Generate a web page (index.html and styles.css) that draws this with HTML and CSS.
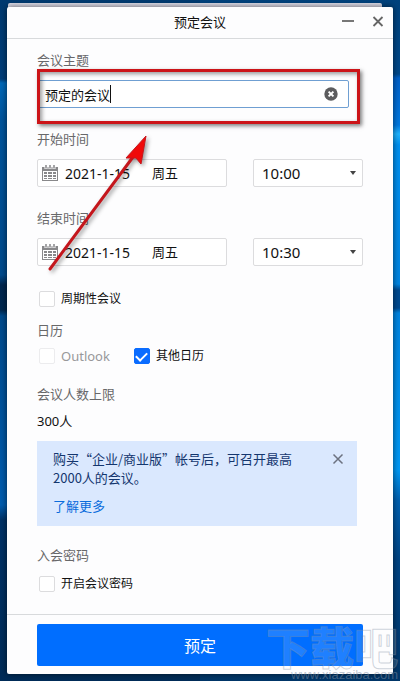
FILE: index.html
```html
<!DOCTYPE html>
<html lang="zh-CN">
<head>
    <meta charset="UTF-8">
    <meta name="viewport" content="width=device-width, initial-scale=1.0">
    <title>预定会议</title>
    <link rel="stylesheet" href="styles.css">
</head>
<body>
<div class="desktop">
    <div class="back-window"></div>
    <div class="window">
        <header class="title-bar">
            <h1>预定会议</h1>
            <div class="window-buttons">
                <button type="button" aria-label="最小化">
                    <svg width="12" height="12" viewBox="0 0 12 12"><path d="M0 5h12" stroke="#777" stroke-width="2"/></svg>
                </button>
                <button type="button" aria-label="关闭">
                    <svg width="12" height="12" viewBox="0 0 12 12"><path d="M1.5 1l9 9M10.5 1l-9 9" stroke="#666" stroke-width="1.8"/></svg>
                </button>
            </div>
        </header>
        <form class="meeting-form" id="meeting-form">
            <div class="group">
                <label class="caption" for="topic">会议主题</label>
                <div class="field topic">
                    <input type="text" id="topic" value="预定的会议">
                    <span class="caret"></span>
                    <button type="button" class="clear" aria-label="清空">
                        <svg width="14" height="14" viewBox="0 0 14 14"><circle cx="7" cy="7" r="6.7" fill="#5c5c5e"/><path d="M4.6 4.6l4.8 4.8M9.4 4.6l-4.8 4.8" stroke="#fff" stroke-width="2"/></svg>
                    </button>
                </div>
            </div>
            <div class="group">
                <label class="caption" for="start-date">开始时间</label>
                <div class="time-row">
                    <div class="field date">
                        <svg class="calendar" width="16" height="16" viewBox="0 0 16 16"><path d="M0 2h16v14H0z" fill="#88888a"/><path d="M1 6h14v9H1z" fill="#fff"/><path d="M4 0v4M8 0v4M12 0v4" stroke="#fff" stroke-width="3"/><path d="M4 0v3.5M8 0v3.5M12 0v3.5" stroke="#88888a" stroke-width="1.5"/><path d="M2 7h3v2H2zM6 7h4v2H6zM11 7h3v2h-3zM2 10h3v2H2zM6 10h4v2H6zM11 10h3v2h-3zM2 13h3v1H2zM6 13h4v1H6zM11 13h3v1h-3z" fill="#88888a"/></svg>
                        <input type="text" id="start-date" value="2021-1-15">
                        <span>周五</span>
                    </div>
                    <div class="field time">
                        <select aria-label="开始时刻"><option>10:00</option><option>10:30</option></select>
                    </div>
                </div>
            </div>
            <div class="group">
                <label class="caption" for="end-date">结束时间</label>
                <div class="time-row">
                    <div class="field date">
                        <svg class="calendar" width="16" height="16" viewBox="0 0 16 16"><path d="M0 2h16v14H0z" fill="#88888a"/><path d="M1 6h14v9H1z" fill="#fff"/><path d="M4 0v4M8 0v4M12 0v4" stroke="#fff" stroke-width="3"/><path d="M4 0v3.5M8 0v3.5M12 0v3.5" stroke="#88888a" stroke-width="1.5"/><path d="M2 7h3v2H2zM6 7h4v2H6zM11 7h3v2h-3zM2 10h3v2H2zM6 10h4v2H6zM11 10h3v2h-3zM2 13h3v1H2zM6 13h4v1H6zM11 13h3v1h-3z" fill="#88888a"/></svg>
                        <input type="text" id="end-date" value="2021-1-15">
                        <span>周五</span>
                    </div>
                    <div class="field time">
                        <select aria-label="结束时刻"><option>10:30</option><option>11:00</option></select>
                    </div>
                </div>
            </div>
            <label class="check"><input type="checkbox"> 周期性会议</label>
            <div class="calendars">
                <p class="caption">日历</p>
                <div class="check-row">
                    <label class="check disabled"><input type="checkbox" disabled> Outlook</label>
                    <label class="check"><input type="checkbox" checked> 其他日历</label>
                </div>
            </div>
            <div class="limit">
                <p class="caption">会议人数上限</p>
                <p class="limit-value">300人</p>
                <div class="notice">
                    <div>
                        <p>购买“企业/商业版”帐号后，可召开最高2000人的会议。</p>
                        <a href="#">了解更多</a>
                    </div>
                    <button type="button" aria-label="关闭提示">
                        <svg width="12" height="12" viewBox="0 0 12 12"><path d="M1.5 1.5l9 9M10.5 1.5l-9 9" stroke="#6c7280" stroke-width="1.5"/></svg>
                    </button>
                </div>
            </div>
            <div class="password">
                <p class="caption">入会密码</p>
                <label class="check"><input type="checkbox"> 开启会议密码</label>
            </div>
        </form>
        <footer class="actions">
            <button type="submit" form="meeting-form">预定</button>
        </footer>
        <!-- tutorial marks over the window -->
        <div class="highlight"></div>
        <svg class="arrow" width="110" height="145" viewBox="0 0 110 145">
            <path d="M7 138L90 26" stroke="#c4161c" stroke-width="3" stroke-linecap="round"/>
            <path d="M103 5L98 33L93 27L83 27Z" fill="#f00a0a" stroke="#c4161c"/>
        </svg>
    </div>
    <div class="watermark">
        <span class="watermark-name">下载吧</span>
        <span class="watermark-url">www.xiazaiba.com</span>
    </div>
</div>
</body>
</html>
```
FILE: styles.css
```css
* {
    box-sizing: border-box;
}
body {
    margin: 0;
    font-family: "Noto Sans", "Noto Sans CJK SC", sans-serif;
    font-size: 13px;
    line-height: 18px;
    color: #111;
}
h1, p {
    margin: 0;
}
button {
    padding: 0;
    border: none;
    background: none;
    cursor: pointer;
}
svg {
    display: block;
}
input, select {
    font-family: inherit;
    color: inherit;
}
.desktop {
    position: relative;
    display: flex;
    min-height: 100vh;
    padding: 7px;
    overflow: hidden;
    background:
        linear-gradient(#003a70 0, #003d78 79px, #0068b8 83px, #00549c 120px, #004a8c 275px, #00264e 285px, #00284f 310px, #004a8c 316px, #005cae 505px, #003266 520px, #002c58 100%) left / 50% 100% no-repeat,
        linear-gradient(#00427c 0, #00488a 74px, #0060c8 78px, #0078e0 125px, #20b4ff 134px, #0090f0 145px, #0084e0 284px, #004a90 290px, #004a90 308px, #0084e0 313px, #0098f4 470px, #0060b0 500px, #004484 560px, #003668 100%) right / 50% 100% no-repeat;
}
.back-window {
    position: absolute;
    top: 3px;
    left: 8px;
    right: 18px;
    height: 30px;
    background: #dcdbe8;
    border-radius: 2px;
}
.window {
    position: relative;
    display: flex;
    flex: 1;
    flex-direction: column;
    background: #fdfdfe;
    border-radius: 2px;
    box-shadow: 0 0 6px rgba(0, 0, 0, 0.6);
}
.title-bar {
    display: grid;
    grid-template-columns: 1fr auto 1fr;
    align-items: center;
    height: 32px;
    padding: 0 9px 2px;
    border-bottom: 1px solid #d8dadc;
}
.title-bar h1 {
    grid-column: 2;
    font-size: 13px;
    font-weight: normal;
}
.window-buttons {
    display: flex;
    justify-content: flex-end;
    gap: 18px;
}
.meeting-form {
    display: flex;
    flex: 1;
    flex-direction: column;
    align-items: stretch;
    padding: 12px 30px 21px;
}
.group {
    margin-bottom: 22px;
}
.caption {
    display: block;
    margin-bottom: 11px;
    color: #68686a;
}
.field {
    display: flex;
    align-items: center;
    height: 28px;
    border: 1px solid #dcdcde;
    border-radius: 2px;
    background: #fff;
}
.field input {
    min-width: 0;
    padding: 0;
    border: none;
    outline: none;
    background: none;
}
.topic {
    margin-right: 14px;
    padding: 0 10px 0 7px;
    border-color: #6f9fd2;
}
.topic input {
    width: 65px;
    font-size: 13px;
}
.caret {
    width: 1px;
    height: 18px;
    background: #111;
}
.clear {
    margin-left: auto;
}
.time-row {
    display: grid;
    grid-template-columns: 19fr 11fr;
    gap: 26px;
}
.date {
    padding-left: 4px;
}
.date input {
    width: 87px;
    margin-left: 7px;
    font-size: 14px;
}
.time {
    position: relative;
}
.time select {
    width: 100%;
    height: 100%;
    padding: 0 8px;
    border: none;
    background: none;
    appearance: none;
    font-size: 15px;
}
.time::after {
    content: "";
    position: absolute;
    top: 11px;
    right: 6px;
    border: 3px solid transparent;
    border-top: 4px solid #444;
    border-bottom: none;
    pointer-events: none;
}
.check {
    display: flex;
    align-items: center;
    gap: 6px;
    padding-left: 2px;
    font-size: 12px;
}
.check input {
    width: 16px;
    height: 16px;
    margin: 0;
    border: 1px solid #dcdcde;
    border-radius: 2px;
    background: #fff;
    appearance: none;
}
.check input:checked {
    border-color: #0a6cff;
    background: #0a6cff;
}
.check input:checked::after {
    content: "";
    display: block;
    width: 5px;
    height: 9px;
    margin: 1px auto 0;
    border: solid #fff;
    border-width: 0 2px 2px 0;
    transform: rotate(45deg);
}
.check.disabled {
    font-size: 13px;
    color: #98989a;
}
.check.disabled input {
    border-color: #ececee;
}
.group + .check {
    margin-top: 2px;
}
.calendars {
    margin-top: 13px;
}
.calendars .caption {
    margin-bottom: 8px;
}
.check-row {
    display: flex;
    gap: 22px;
}
.limit {
    margin-top: 20px;
}
.limit .caption {
    margin-bottom: 9px;
}
.notice {
    display: flex;
    justify-content: space-between;
    align-items: flex-start;
    gap: 32px;
    margin: 11px 6px 0 0;
    padding: 8px 13px 11px 16px;
    background: #dae8fe;
    color: #14366e;
    font-family: "Noto Sans CJK SC", sans-serif;
    line-height: 19px;
}
.notice a {
    display: block;
    margin-top: 9px;
    color: #0a6cdc;
    text-decoration: none;
}
.notice button {
    margin-top: 4px;
}
.password {
    margin-top: 20px;
}
.actions {
    padding: 9px 30px 8px;
    border-top: 1px solid #d8dadc;
}
.actions button {
    display: block;
    width: 100%;
    height: 42px;
    border-radius: 2px;
    background: #006eff;
    color: #fff;
    font-family: inherit;
    font-size: 16px;
}
.highlight {
    position: absolute;
    top: 62px;
    left: 30px;
    right: 33px;
    height: 55px;
    border: 3px solid #cc1418;
    box-shadow: 2px 2px 4px rgba(0, 0, 0, 0.5), inset 2px 2px 4px rgba(0, 0, 0, 0.4);
    pointer-events: none;
}
.arrow {
    position: absolute;
    top: 124px;
    left: 36px;
    filter: drop-shadow(2px 2px 2px rgba(0, 0, 0, 0.4));
    pointer-events: none;
}
.watermark {
    position: absolute;
    right: 2px;
    bottom: 0;
    display: flex;
    flex-direction: column;
    align-items: flex-end;
    pointer-events: none;
}
.watermark-name {
    font-family: "Noto Sans CJK SC", sans-serif;
    font-size: 44px;
    font-weight: 900;
    line-height: 46px;
    color: rgba(255, 255, 255, 0.12);
    -webkit-text-stroke: 1px rgba(130, 145, 165, 0.4);
}
.watermark-url {
    font-family: "Liberation Sans", sans-serif;
    font-size: 13px;
    line-height: 12px;
    color: rgba(130, 145, 165, 0.5);
}
```
